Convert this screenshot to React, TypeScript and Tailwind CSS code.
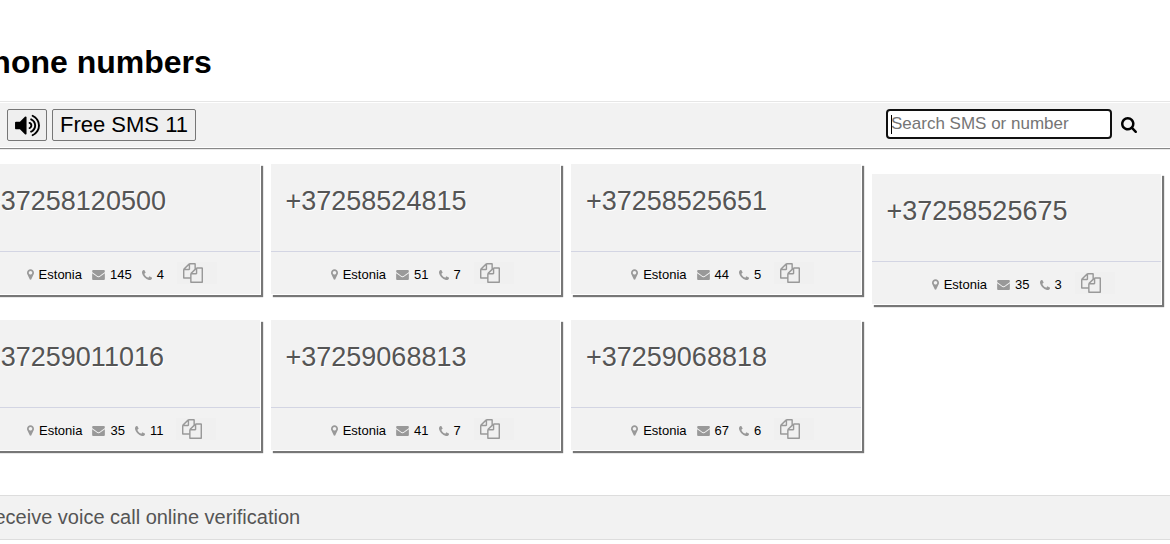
import type { ReactNode } from "react";

type PhoneNumber = {
  number: string;
  country: string;
  sms: number;
  calls: number;
};

const numbers: PhoneNumber[] = [
  { number: "+37258120500", country: "Estonia", sms: 145, calls: 4 },
  { number: "+37258524815", country: "Estonia", sms: 51, calls: 7 },
  { number: "+37258525651", country: "Estonia", sms: 44, calls: 5 },
  { number: "+37258525675", country: "Estonia", sms: 35, calls: 3 },
  { number: "+37259011016", country: "Estonia", sms: 35, calls: 11 },
  { number: "+37259068813", country: "Estonia", sms: 41, calls: 7 },
  { number: "+37259068818", country: "Estonia", sms: 67, calls: 6 },
];

// Font Awesome 4 outlines, drawn on the 1792 unit grid
const icons = {
  marker: {
    viewBox: "384 128 1024 1536",
    d: "M1152 640q0-106-75-181t-181-75-181 75-75 181 75 181 181 75 181-75 75-181zm256 0q0 109-33 179l-364 774q-16 33-47.5 52t-67.5 19-67.5-19-46.5-52l-365-774q-33-70-33-179 0-212 150-362t362-150 362 150 150 362z",
  },
  envelope: {
    viewBox: "0 256 1792 1408",
    d: "M1792 710v794q0 66-47 113t-113 47h-1472q-66 0-113-47t-47-113v-794q44 49 101 87 362 246 497 345 57 42 92.5 65.5t94.5 48 110 24.5h2q51 0 110-24.5t94.5-48 92.5-65.5q170-123 498-345 57-39 100-87zm0-294q0 79-49 151t-122 123q-376 261-468 325-10 7-42.5 31t-54 38.5-52 32.5-57.5 27-50 9h-2q-23 0-50-9t-57.5-27-52-32.5-54-38.5-42.5-31q-91-64-262-182.5t-205-142.5q-62-42-117-115.5t-55-136.5q0-78 41.5-130t118.5-52h1472q65 0 112.5 47t47.5 113z",
  },
  phone: {
    viewBox: "192 128 1408 1408",
    d: "M1600 1240q0 27-10 70.5t-21 68.5q-21 50-122 106-94 51-186 51-27 0-53-3.5t-57.5-12.5-47-14.5-55.5-20.5-49-18q-98-35-175-83-127-79-264-216t-216-264q-48-77-83-175-3-9-18-49t-20.5-55.5-14.5-47-12.5-57.5-3.5-53q0-92 51-186 56-101 106-122 25-11 68.5-21t70.5-10q14 0 21 3 18 6 53 76 11 19 30 54t35 63.5 31 53.5q3 4 17.5 25t21.5 35.5 7 28.5q0 20-28.5 50t-62 55-62 53-28.5 46q0 9 5 22.5t8.5 20.5 14 24 11.5 19q76 137 174 235t235 174q2 1 19 11.5t24 14 20.5 8.5 22.5 5q18 0 46-28.5t53-62 55-62 50-28.5q14 0 28.5 7t35.5 21.5 25 17.5q25 15 53.5 31t63.5 35 54 30q70 35 76 53 3 7 3 21z",
  },
  files: {
    viewBox: "0 0 1792 1792",
    d: "M1696 384q40 0 68 28t28 68v1216q0 40-28 68t-68 28h-960q-40 0-68-28t-28-68v-288h-544q-40 0-68-28t-28-68v-672q0-40 20-88t48-76l408-408q28-28 76-48t88-20h416q40 0 68 28t28 68v328q68-40 128-40h416zm-544 213l-299 299h299v-299zm-640-384l-299 299h299v-299zm196 647l316-316v-416h-384v416q0 40-28 68t-68 28h-416v640h512v-256q0-40 20-88t48-76zm956 804v-1152h-384v416q0 40-28 68t-68 28h-416v640h896z",
  },
  volume: {
    viewBox: "64 128 1664 1536",
    d: "M832 352v1088q0 26-19 45t-45 19-45-19l-333-333h-262q-26 0-45-19t-19-45v-384q0-26 19-45t45-19h262l333-333q19-19 45-19t45 19 19 45zm384 544q0 76-42.5 141.5t-112.5 93.5q-10 5-25 5-26 0-45-18.5t-19-45.5q0-21 12-35.5t29-25 34-23 29-35.5 12-57-12-57-29-35.5-34-23-29-25-12-35.5q0-27 19-45.5t45-18.5q15 0 25 5 70 27 112.5 93t42.5 142zm256 0q0 153-85 282.5t-225 188.5q-13 5-25 5-27 0-46-19t-19-45q0-39 39-59 56-29 76-44 74-54 115.5-135.5t41.5-173.5-41.5-173.5-115.5-135.5q-20-15-76-44-39-20-39-59 0-26 19-45t45-19q13 0 26 5 140 59 225 188.5t85 282.5zm256 0q0 230-127 422.5t-338 283.5q-13 5-26 5-26 0-45-19t-19-45q0-36 39-59 7-4 22.5-10.5t22.5-10.5q46-25 82-51 123-91 192-227t69-289-69-289-192-227q-36-26-82-51-7-4-22.5-10.5t-22.5-10.5q-39-23-39-59 0-26 19-45t45-19q13 0 26 5 211 91 338 283.5t127 422.5z",
  },
  search: {
    viewBox: "64 128 1664 1664",
    d: "M1216 832q0-185-131.5-316.5t-316.5-131.5-316.5 131.5-131.5 316.5 131.5 316.5 316.5 131.5 316.5-131.5 131.5-316.5zm512 832q0 52-38 90t-90 38q-54 0-90-38l-343-342q-179 124-399 124-143 0-273.5-55.5t-225-150-150-225-55.5-273.5 55.5-273.5 150-225 225-150 273.5-55.5 273.5 55.5 225 150 150 225 55.5 273.5q0 220-124 399l343 343q37 37 37 90z",
  },
};

const Icon = ({ name, className }: { name: keyof typeof icons; className: string }) => (
  <svg viewBox={icons[name].viewBox} className={`shrink-0 fill-current ${className}`} aria-hidden="true">
    <path d={icons[name].d} />
  </svg>
);

const Stat = ({ icon, children }: { icon: ReactNode; children: ReactNode }) => (
  <span className="flex items-center gap-[5px] pt-[3px]">
    <span className="text-[#999]">{icon}</span>
    {children}
  </span>
);

const NumberCard = ({ item, className = "" }: { item: PhoneNumber; className?: string }) => (
  <article className={`border-r border-b border-white bg-[#f2f2f2] shadow-[2px_2px_1px_#777] ${className}`}>
    <h2 className="h-[87px] px-[15px] pt-[21px] text-[27px] leading-[32px] text-[#555] [text-shadow:1px_1px_0_#fff]">
      {item.number}
    </h2>
    <div className="flex h-[43px] items-center justify-center gap-[10px] border-t border-[#d3d5e3] pl-[14px] text-[13px] leading-[16px]">
      <Stat icon={<Icon name="marker" className="h-[11px] w-[7px]" />}>{item.country}</Stat>
      <Stat icon={<Icon name="envelope" className="h-[10px] w-[13px]" />}>{item.sms}</Stat>
      <Stat icon={<Icon name="phone" className="h-[10px] w-[10px]" />}>{item.calls}</Stat>
      <button
        type="button"
        aria-label={`Copy ${item.number}`}
        className="ml-[3px] h-[22px] w-[40px] bg-[#f0f0f0] pl-[6px] text-[#999]"
      >
        <Icon name="files" className="h-[20px] w-[20px]" />
      </button>
    </div>
  </article>
);

export default function App() {
  return (
    <div className="overflow-hidden bg-white font-['Liberation_Sans',Arial,sans-serif] text-black">
      {/* the page sits scrolled a little to the right */}
      <div className="-ml-[30px]">
        <h1 className="pt-[43px] pb-[21px] text-[32px] leading-[38px] font-bold">Phone numbers</h1>

        <div className="flex h-[46px] items-center justify-between border-y border-white bg-[#f2f2f2] pr-[32px] pl-[37px] shadow-[0_-1px_0_#e6e6e6,0_1px_1px_#888]">
          <div className="flex gap-[5px]">
            <button
              type="button"
              aria-label="Sound"
              className="flex h-[32px] w-[40px] items-center justify-center rounded-[2px] border border-[#767676] bg-[#efefef]"
            >
              <Icon name="volume" className="h-[23px] w-[25px]" />
            </button>
            <button
              type="button"
              className="h-[32px] rounded-[2px] border border-[#767676] bg-[#efefef] px-[7px] text-[22px] leading-[28px]"
            >
              Free SMS 11
            </button>
          </div>
          <form className="flex items-center gap-[8px] pb-[2px]">
            <div className="relative">
              <input
                type="text"
                aria-label="Search SMS or number"
                placeholder="Search SMS or number"
                className="block h-[30px] w-[226px] rounded-[4px] border-2 border-[#101010] bg-white px-[3px] text-[17px] leading-[20px] outline-none placeholder:text-[#757575]"
              />
              <span className="absolute top-[6px] left-[5px] h-[19px] w-px bg-black" />
            </div>
            <button type="button" aria-label="Search" className="flex w-[18px] justify-center pt-[2px]">
              <Icon name="search" className="h-[16px] w-[16px]" />
            </button>
          </form>
        </div>

        <main className="grid grid-cols-4 items-start gap-x-[10px] gap-y-[15px] pt-[16px] pr-[8px] pb-[44px]">
          {numbers.map((item, index) => (
            <NumberCard key={item.number} item={item} className={index === 3 ? "mt-[10px]" : ""} />
          ))}
        </main>

        <footer className="border-y border-[#ddd] bg-[#f2f2f2] px-[10px] py-[10px] text-[20px] leading-[23px] text-[#555]">
          Receive voice call online verification
        </footer>
      </div>
    </div>
  );
}
